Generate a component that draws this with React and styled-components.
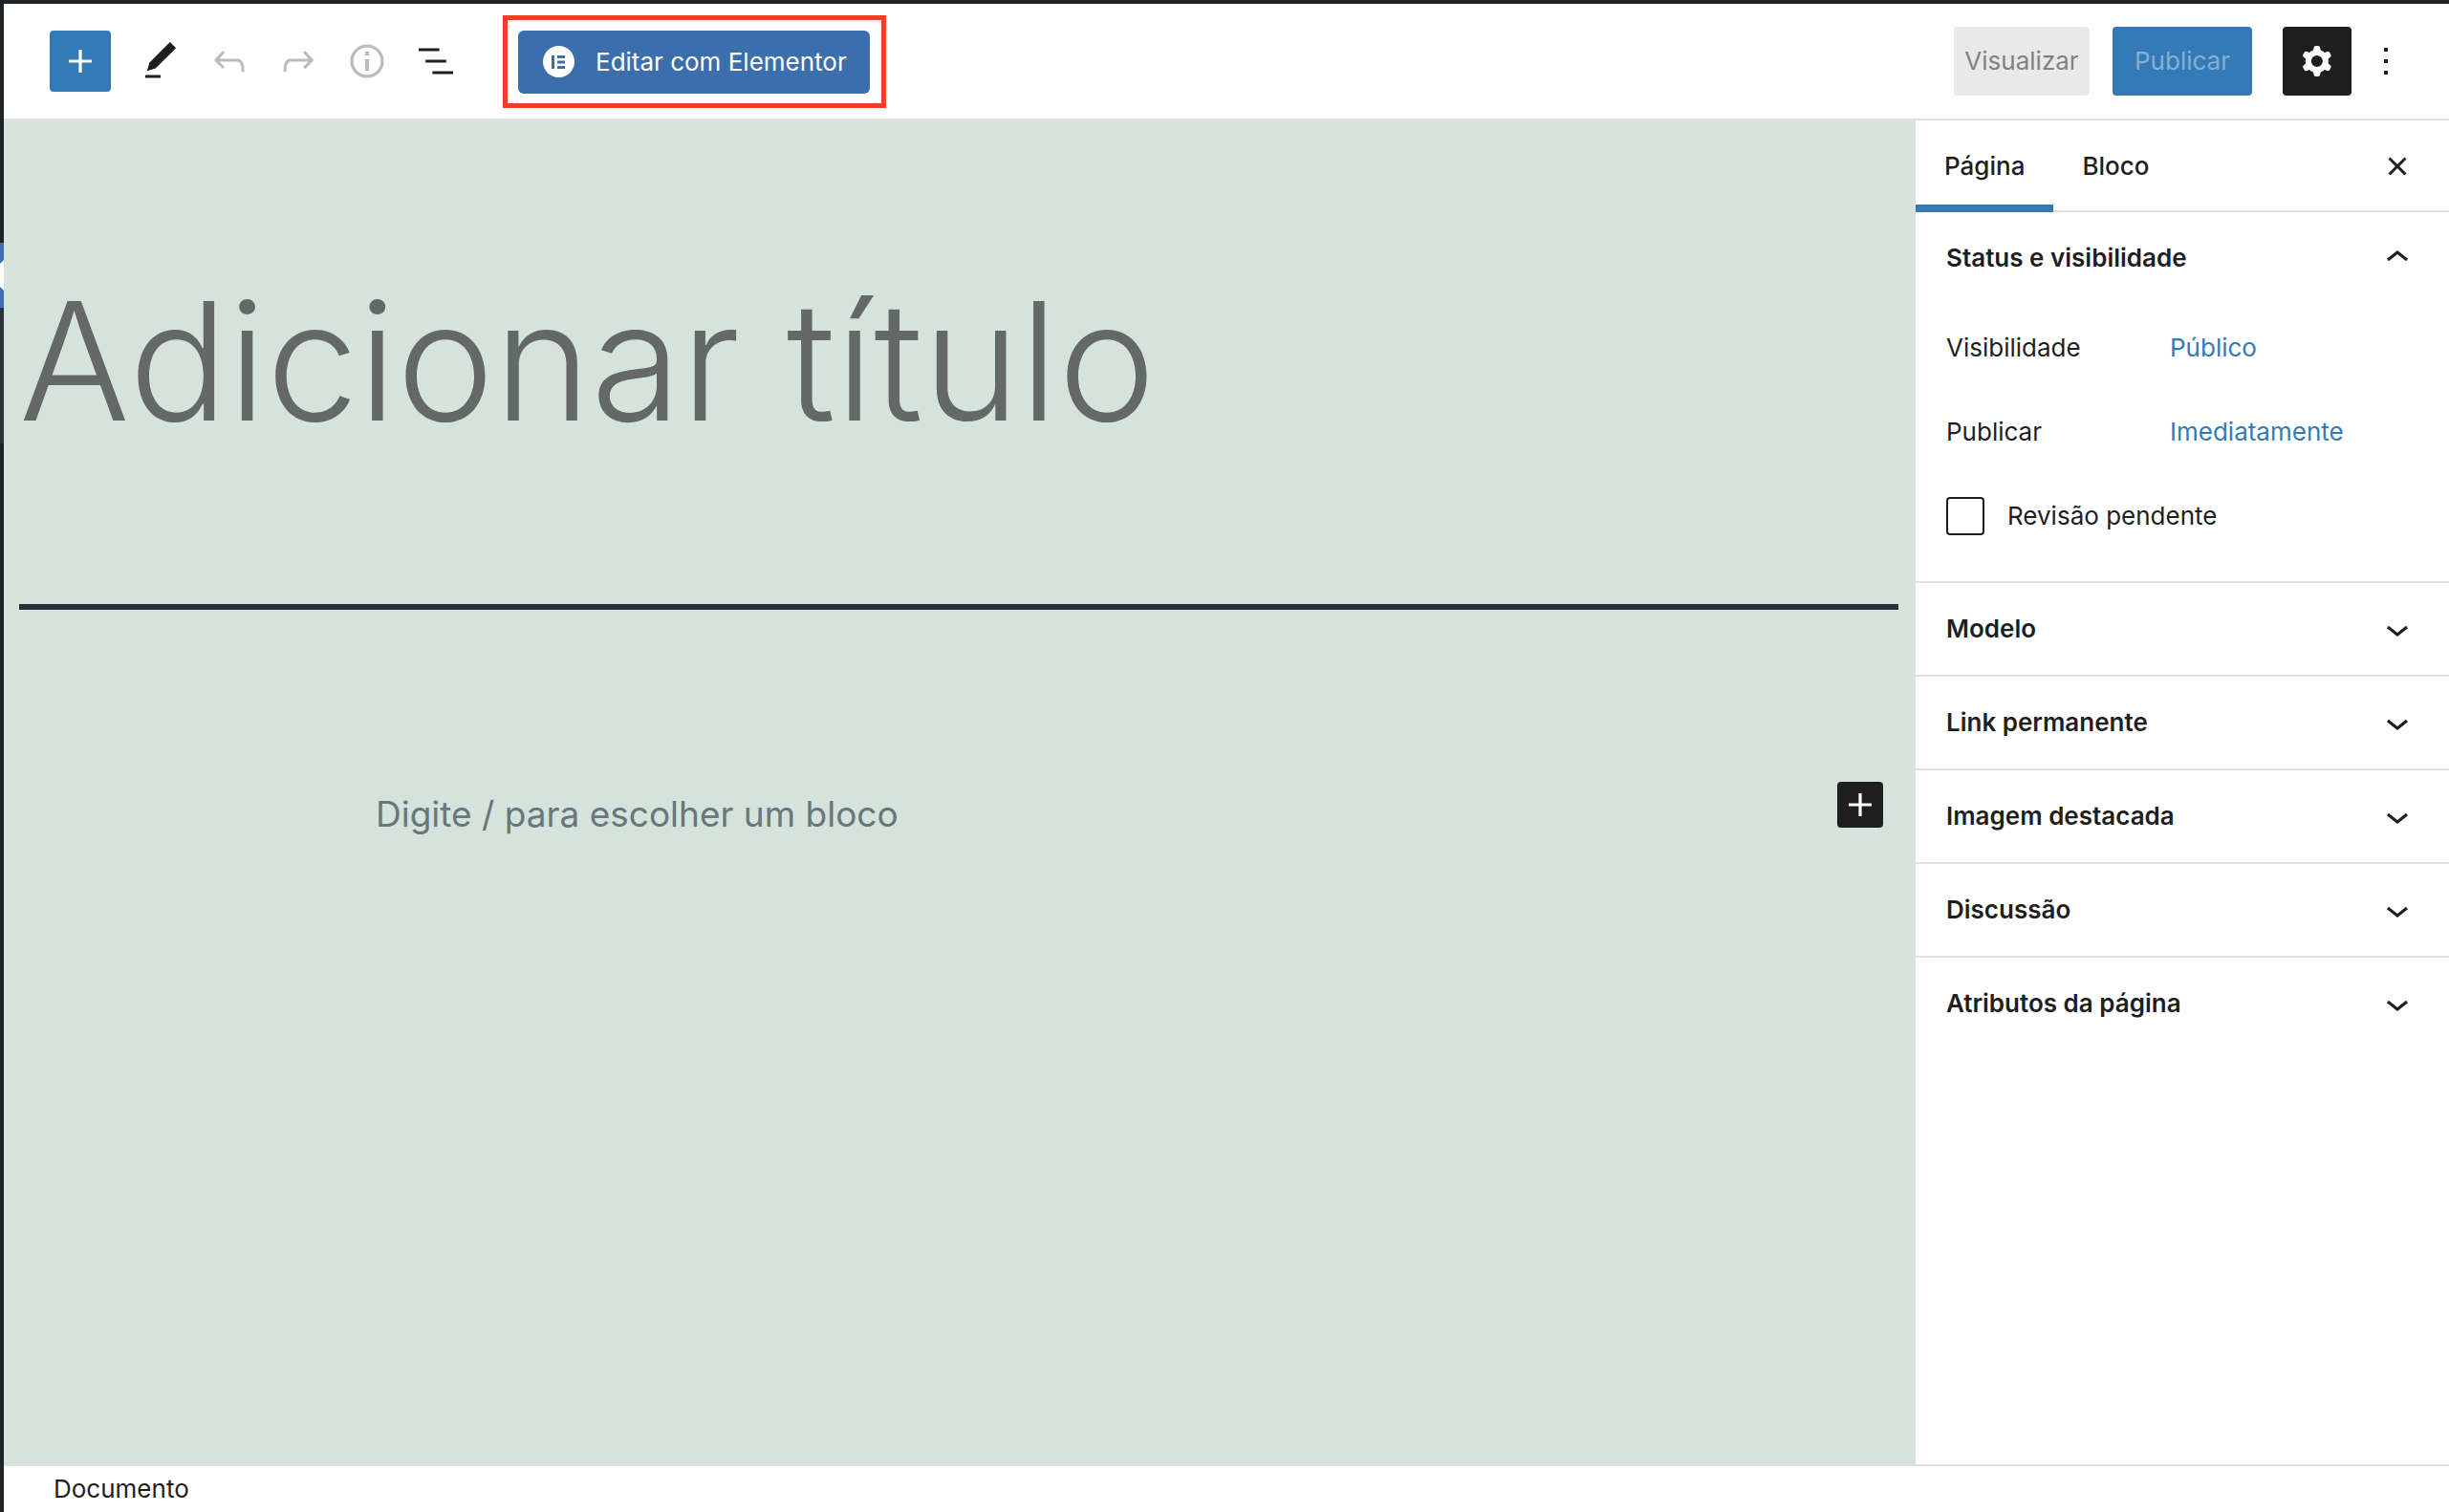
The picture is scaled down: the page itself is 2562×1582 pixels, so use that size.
import React, { useState } from 'react';
import styled, { createGlobalStyle } from 'styled-components';

const GlobalStyle = createGlobalStyle`
  *, *::before, *::after {
    box-sizing: border-box;
  }
  body {
    margin: 0;
    font-family: Inter, Roboto, sans-serif;
    font-size: 26px;
    line-height: 32px;
    color: #1e1e1e;
    background: #fff;
  }
  button, input {
    font: inherit;
    color: inherit;
  }
  button {
    border: 0;
    padding: 0;
    background: none;
    cursor: pointer;
  }
`;

const Screen = styled.div`
  display: grid;
  grid-template-columns: 4px minmax(0, 1fr);
  min-height: 100vh;
  border-top: 4px solid #1d2327;
`;

const AdminMenu = styled.nav`
  display: flex;
  flex-direction: column;
  padding-top: 250px;
  background: #1d2327;
`;

const AdminItem = styled.a`
  display: flex;
  align-items: center;
  height: 68px;
  background: #3b6eac;
`;

const AdminSubmenu = styled.div`
  height: 142px;
  background: #2c3338;
`;

const Editor = styled.div`
  display: flex;
  flex-direction: column;
`;

const Header = styled.header`
  display: flex;
  align-items: center;
  justify-content: space-between;
  height: 122px;
  padding: 0 30px 0 48px;
  border-bottom: 2px solid #e0e0e0;
`;

const Tools = styled.div`
  display: flex;
  align-items: center;
`;

const IconButton = styled.button`
  display: flex;
  align-items: center;
  justify-content: center;
  width: 72px;
  height: 72px;
  border-radius: 4px;
  color: ${({ $dark }) => ($dark ? '#fff' : '#1e1e1e')};
  background: ${({ $dark }) => ($dark ? '#1e1e1e' : 'transparent')};
  &:disabled {
    color: #bbb;
    cursor: default;
  }
`;

const InserterButton = styled(IconButton)`
  width: 64px;
  height: 64px;
  margin-right: 16px;
  color: #fff;
  background: #347ab7;
`;

const Highlight = styled.div`
  display: flex;
  margin-left: 34px;
  padding: 11px 12px 10px 11px;
  border: 5px solid #ec4125;
`;

const ElementorButton = styled.button`
  display: flex;
  align-items: center;
  gap: 22px;
  height: 66px;
  padding: 0 24px 0 26px;
  border-radius: 6px;
  color: #fff;
  background: #3b6eac;
`;

const Actions = styled.div`
  display: flex;
  align-items: center;
`;

const ActionButton = styled.button`
  height: 72px;
  width: ${({ $primary }) => ($primary ? '146px' : '142px')};
  margin-right: ${({ $primary }) => ($primary ? '32px' : '24px')};
  border-radius: 4px;
  color: ${({ $primary }) => ($primary ? '#85afd4' : '#828282')};
  background: ${({ $primary }) => ($primary ? '#347ab7' : '#e9e9e9')};
`;

const Body = styled.div`
  display: flex;
  flex: 1;
`;

const Canvas = styled.main`
  flex: 1;
  min-width: 0;
  padding: 126px 16px 0;
  background: #d4e3dc;
`;

const Title = styled.h1`
  margin: 0;
  padding-bottom: 130px;
  border-bottom: 6px solid #282f3b;
  font-size: 172px;
  font-weight: 300;
  line-height: 250px;
  color: #646968;
`;

const BlockRow = styled.div`
  display: grid;
  grid-template-columns: 1fr minmax(0, 1220px) 1fr;
  align-items: center;
  margin-top: 180px;
`;

const Placeholder = styled.p`
  grid-column: 2;
  margin: 0;
  font-size: 37px;
  line-height: 68px;
  color: #69767b;
`;

const AppenderButton = styled(IconButton)`
  justify-self: end;
  align-self: start;
  width: 48px;
  height: 48px;
  margin-right: 16px;
`;

const Sidebar = styled.aside`
  flex: 0 0 560px;
  border-left: 2px solid #e0e0e0;
  background: #fff;
`;

const Tabs = styled.div`
  display: flex;
  align-items: flex-start;
  height: 96px;
  padding-right: 18px;
  border-bottom: 2px solid #e0e0e0;
`;

const Tab = styled.button`
  height: 96px;
  padding: 0 30px;
  font-weight: 500;
  box-shadow: ${({ $active }) => ($active ? 'inset 0 -8px 0 #347ab7' : 'none')};
`;

const CloseButton = styled(IconButton)`
  height: 96px;
  margin-left: auto;
`;

const Panel = styled.section`
  border-bottom: ${({ $last }) => ($last ? '0' : '2px solid #e0e0e0')};
`;

const PanelToggle = styled.button`
  display: flex;
  align-items: center;
  justify-content: space-between;
  width: 100%;
  height: 96px;
  padding: 0 30px 0 32px;
  font-weight: 600;
  text-align: left;
`;

const PanelBody = styled.div`
  display: flex;
  flex-direction: column;
  gap: 16px;
  padding: 10px 32px 32px;
`;

const PanelRow = styled.div`
  display: grid;
  grid-template-columns: 234px 1fr;
  align-items: center;
  height: 72px;
`;

const ValueLink = styled.a`
  color: #347ab7;
  text-decoration: none;
`;

const CheckRow = styled.label`
  display: flex;
  align-items: center;
  gap: 24px;
  height: 72px;
`;

const Checkbox = styled.input`
  appearance: none;
  width: 40px;
  height: 40px;
  margin: 0;
  border: 2px solid #1e1e1e;
  border-radius: 4px;
  background: #fff;
  &:checked {
    background: #347ab7;
  }
`;

const Footer = styled.footer`
  display: flex;
  align-items: center;
  height: 50px;
  padding: 0 52px;
  border-top: 2px solid #e0e0e0;
`;

const icons = {
  plus: 'M18 11.2h-5.2V6h-1.6v5.2H6v1.6h5.2V18h1.6v-5.2H18z',
  edit: 'M20.1 5.1L16.9 2 6.2 12.7l-1.3 4.4 4.5-1.3L20.1 5.1zM4 20.8h8v-1.5H4v1.5z',
  undo: 'M18.3 11.7c-.6-.6-1.4-.9-2.3-.9H6.7l2.9-3.3-1.1-1-4.5 5L8.5 16l1-1-2.7-2.7H16c.5 0 .9.2 1.3.5 1 1 1 3.4 1 4.5v.3h1.5v-.2c0-1.5 0-4.3-1.5-5.7z',
  redo: 'M15.6 6.5l-1.1 1 2.9 3.3H8c-.9 0-1.7.3-2.3.9-1.4 1.5-1.4 4.2-1.4 5.6v.2h1.5v-.3c0-1.1 0-3.5 1-4.5.3-.3.7-.5 1.3-.5h9.2L14.5 15l1.1 1.1 4.6-4.6-4.6-5z',
  info: 'M12 3.2c-4.8 0-8.8 3.9-8.8 8.8 0 4.8 3.9 8.8 8.8 8.8 4.8 0 8.8-3.9 8.8-8.8 0-4.8-4-8.8-8.8-8.8zm0 16c-4 0-7.2-3.3-7.2-7.2C4.8 8 8 4.8 12 4.8s7.2 3.3 7.2 7.2c0 4-3.2 7.2-7.2 7.2zM11 17h2v-6h-2v6zm0-8h2V7h-2v2z',
  list: 'M13.8 5.2H3v1.5h10.8V5.2zm-3.6 12v1.5H21v-1.5H10.2zm7.2-6H6.6v1.5h10.8v-1.5z',
  gear: 'M10.289 4.836A1 1 0 0111.275 4h1.306a1 1 0 01.987.836l.244 1.466c.787.26 1.503.679 2.108 1.218l1.393-.522a1 1 0 011.216.437l.653 1.13a1 1 0 01-.23 1.273l-1.148.944a6.025 6.025 0 010 2.435l1.149.946a1 1 0 01.23 1.272l-.653 1.13a1 1 0 01-1.216.437l-1.394-.522c-.605.54-1.32.958-2.108 1.218l-.244 1.466a1 1 0 01-.987.836h-1.306a1 1 0 01-.986-.836l-.244-1.466a5.995 5.995 0 01-2.108-1.218l-1.394.522a1 1 0 01-1.217-.436l-.653-1.131a1 1 0 01.23-1.272l1.149-.946a6.026 6.026 0 010-2.435l-1.148-.944a1 1 0 01-.23-1.272l.653-1.131a1 1 0 011.217-.437l1.393.522a5.994 5.994 0 012.108-1.218l.244-1.466zM14.929 12a3 3 0 11-6 0 3 3 0 016 0z',
  more: 'M13 19h-2v-2h2v2zm0-6h-2v-2h2v2zm0-6h-2V5h2v2z',
  close: 'M12 13.06l3.712 3.713 1.061-1.06L13.061 12l3.712-3.712-1.06-1.06L12 10.938 8.288 7.227l-1.061 1.06L10.939 12l-3.712 3.712 1.06 1.061L12 13.061z',
  up: 'M6.5 12.4L12 8l5.5 4.4-.9 1.2L12 10l-4.5 3.6-1-1.2z',
  down: 'M17.5 11.6L12 16l-5.5-4.4.9-1.2L12 14l4.5-3.6 1 1.2z',
};

const Icon = ({ name }) => (
  <svg width="48" height="48" viewBox="0 0 24 24" fill="currentColor" fillRule="evenodd" aria-hidden="true">
    <path d={icons[name]} />
  </svg>
);

const ElementorLogo = () => (
  <svg width="33" height="33" viewBox="0 0 33 33" aria-hidden="true">
    <circle cx="16.5" cy="16.5" r="16.5" fill="#fff" />
    <path fill="#3b6eac" d="M9 10h3v14H9zM15 10h8v3h-8zM15 15.5h8v3h-8zM15 21h8v3h-8z" />
  </svg>
);

const closedPanels = ['Modelo', 'Link permanente', 'Imagem destacada', 'Discussão', 'Atributos da página'];

const App = () => {
  const [pending, setPending] = useState(false);

  return (
    <>
      <GlobalStyle />
      <Screen>
        <AdminMenu>
          <AdminItem href="#paginas" aria-label="Páginas">
            <svg width="4" height="32" viewBox="0 0 4 32" aria-hidden="true">
              <path d="M4 0v32L0 28V4z" fill="#fff" />
            </svg>
          </AdminItem>
          <AdminSubmenu />
        </AdminMenu>
        <Editor>
          <Header>
            <Tools>
              <InserterButton aria-label="Adicionar bloco"><Icon name="plus" /></InserterButton>
              <IconButton aria-label="Ferramentas"><Icon name="edit" /></IconButton>
              <IconButton aria-label="Desfazer" disabled><Icon name="undo" /></IconButton>
              <IconButton aria-label="Refazer" disabled><Icon name="redo" /></IconButton>
              <IconButton aria-label="Detalhes" disabled><Icon name="info" /></IconButton>
              <IconButton aria-label="Visualização em lista"><Icon name="list" /></IconButton>
              <Highlight>
                <ElementorButton>
                  <ElementorLogo />
                  Editar com Elementor
                </ElementorButton>
              </Highlight>
            </Tools>
            <Actions>
              <ActionButton disabled>Visualizar</ActionButton>
              <ActionButton $primary disabled>Publicar</ActionButton>
              <IconButton $dark aria-label="Configurações"><Icon name="gear" /></IconButton>
              <IconButton aria-label="Opções"><Icon name="more" /></IconButton>
            </Actions>
          </Header>
          <Body>
            <Canvas>
              <Title>Adicionar título</Title>
              <BlockRow>
                <Placeholder>Digite / para escolher um bloco</Placeholder>
                <AppenderButton $dark aria-label="Adicionar bloco"><Icon name="plus" /></AppenderButton>
              </BlockRow>
            </Canvas>
            <Sidebar>
              <Tabs>
                <Tab $active>Página</Tab>
                <Tab>Bloco</Tab>
                <CloseButton aria-label="Fechar configurações"><Icon name="close" /></CloseButton>
              </Tabs>
              <Panel>
                <PanelToggle aria-expanded="true">
                  Status e visibilidade
                  <Icon name="up" />
                </PanelToggle>
                <PanelBody>
                  <PanelRow>
                    <span>Visibilidade</span>
                    <ValueLink href="#visibilidade">Público</ValueLink>
                  </PanelRow>
                  <PanelRow>
                    <span>Publicar</span>
                    <ValueLink href="#publicar">Imediatamente</ValueLink>
                  </PanelRow>
                  <CheckRow>
                    <Checkbox type="checkbox" checked={pending} onChange={(e) => setPending(e.target.checked)} />
                    Revisão pendente
                  </CheckRow>
                </PanelBody>
              </Panel>
              {closedPanels.map((title, i) => (
                <Panel key={title} $last={i === closedPanels.length - 1}>
                  <PanelToggle aria-expanded="false">
                    {title}
                    <Icon name="down" />
                  </PanelToggle>
                </Panel>
              ))}
            </Sidebar>
          </Body>
          <Footer>Documento</Footer>
        </Editor>
      </Screen>
    </>
  );
};

export default App;
